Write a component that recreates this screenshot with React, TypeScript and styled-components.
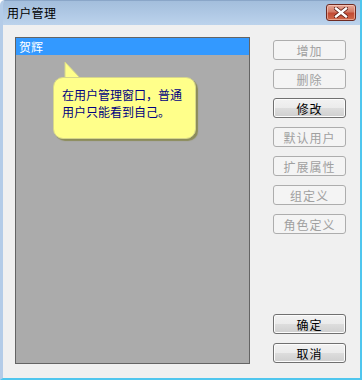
import React, { FC } from 'react';
import styled, { createGlobalStyle } from 'styled-components';

const GlobalStyle = createGlobalStyle`
	html, body {
		margin: 0;
		padding: 0;
		background: #ffffff;
	}
	body {
		font-family: 'Noto Sans CJK SC', 'Liberation Sans', sans-serif;
		font-size: 12px;
	}
`;

const buttons = [
	{ id: 1, label: '增加', enabled: false },
	{ id: 2, label: '删除', enabled: false },
	{ id: 3, label: '修改', enabled: true },
	{ id: 4, label: '默认用户', enabled: false },
	{ id: 5, label: '扩展属性', enabled: false },
	{ id: 6, label: '组定义', enabled: false },
	{ id: 7, label: '角色定义', enabled: false },
];

const Window = styled.div`
	width: 362px;
	height: 380px;
	box-sizing: border-box;
	display: flex;
	flex-direction: column;
	background: #f0f0f0;
	border-left: 3px solid #b4cce8;
	border-right: 2px solid #4fc6ee;
	border-bottom: 2px solid #4fc6ee;
	border-top-left-radius: 5px;
	overflow: hidden;
`;

const TitleBar = styled.div`
	height: 25px;
	flex: none;
	display: flex;
	align-items: center;
	justify-content: space-between;
	padding: 0 4px 2px 4px;
	box-sizing: border-box;
	background: linear-gradient(to bottom, #a3bedc 0%, #afc8e4 50%, #bcd3ec 100%);
	border-top: 1px solid #8aa6c8;
`;

const Title = styled.span`
	font-size: 12px;
	color: #000000;
	letter-spacing: 0.3px;
`;

const CloseButton = styled.div`
	width: 28px;
	height: 15px;
	margin-top: 1px;
	border: 1px solid #6e2a22;
	border-radius: 3px;
	background: linear-gradient(to bottom, #e6a898 0%, #d27a66 45%, #c24a34 55%, #cf6a4c 100%);
	display: flex;
	align-items: center;
	justify-content: center;
	box-shadow: inset 0 0 0 1px rgba(255, 220, 210, 0.5);
`;

const Body = styled.div`
	flex: 1;
	display: flex;
	padding: 12px 0 14px 12px;
	gap: 23px;
`;

const ListBox = styled.div`
	position: relative;
	width: 233px;
	flex: none;
	background: #ababab;
	border: 1px solid #646464;
`;

const SelectedRow = styled.div`
	height: 17px;
	line-height: 17px;
	padding-left: 3px;
	background: #3399ff;
	color: #ffffff;
	font-size: 12px;
`;

const Balloon = styled.div`
	position: absolute;
	left: 37px;
	top: 39px;
	width: 143px;
	height: 62px;
	box-sizing: border-box;
	padding: 8px 0 0 8px;
	background: #ffff8a;
	border: 1px solid #d6d68a;
	border-radius: 10px;
	box-shadow: 2px 2px 1px #8c8c5a;
	color: #000080;
	font-size: 12px;
	line-height: 17px;
	white-space: nowrap;
`;

const BalloonTail = styled.svg`
	position: absolute;
	left: 48px;
	top: 24px;
	overflow: visible;
`;

const ButtonColumn = styled.div`
	width: 73px;
	display: flex;
	flex-direction: column;
	justify-content: space-between;
	padding: 3px 0 1px 0;
`;

const ButtonGroup = styled.div`
	display: flex;
	flex-direction: column;
	gap: 9px;
`;

const DialogButton = styled.div<{ $enabled: boolean }>`
	height: 20px;
	box-sizing: border-box;
	display: flex;
	align-items: center;
	justify-content: center;
	border-radius: 3px;
	font-size: 12px;
	letter-spacing: 1px;
	border: 1px solid ${(p) => (p.$enabled ? '#707070' : '#adadad')};
	color: ${(p) => (p.$enabled ? '#000000' : '#a0a0a0')};
	background: ${(p) =>
		p.$enabled
			? 'linear-gradient(to bottom, #f2f2f2 0%, #ebebeb 50%, #dddddd 51%, #cfcfcf 100%)'
			: '#f4f4f4'};
	box-shadow: ${(p) => (p.$enabled ? 'inset 0 0 0 1px #fcfcfc' : 'none')};
`;

const App: FC = () => {
	return (
		<>
			<GlobalStyle />
			<Window>
				<TitleBar>
					<Title>用户管理</Title>
					<CloseButton>
						<svg width='14' height='11' viewBox='0 0 14 11'>
							<path
								d='M2 1.5 L12 9.5 M12 1.5 L2 9.5'
								stroke='#5a1a12'
								strokeWidth='4'
								strokeLinecap='square'
							/>
							<path
								d='M2 1.5 L12 9.5 M12 1.5 L2 9.5'
								stroke='#ffffff'
								strokeWidth='2.4'
								strokeLinecap='square'
							/>
						</svg>
					</CloseButton>
				</TitleBar>
				<Body>
					<ListBox>
						<SelectedRow>贺辉</SelectedRow>
						<BalloonTail width='20' height='18' viewBox='0 0 20 18'>
							<path d='M1 0 L1 16 L16 16 Z' fill='#ffff8a' stroke='#d6d68a' strokeWidth='1' />
						</BalloonTail>
						<Balloon>
							在用户管理窗口，普通
							<br />
							用户只能看到自己。
						</Balloon>
					</ListBox>
					<ButtonColumn>
						<ButtonGroup>
							{buttons.map((b) => (
								<DialogButton key={b.id} $enabled={b.enabled}>
									{b.label}
								</DialogButton>
							))}
						</ButtonGroup>
						<ButtonGroup>
							<DialogButton $enabled>确定</DialogButton>
							<DialogButton $enabled>取消</DialogButton>
						</ButtonGroup>
					</ButtonColumn>
				</Body>
			</Window>
		</>
	);
};

export default App;
